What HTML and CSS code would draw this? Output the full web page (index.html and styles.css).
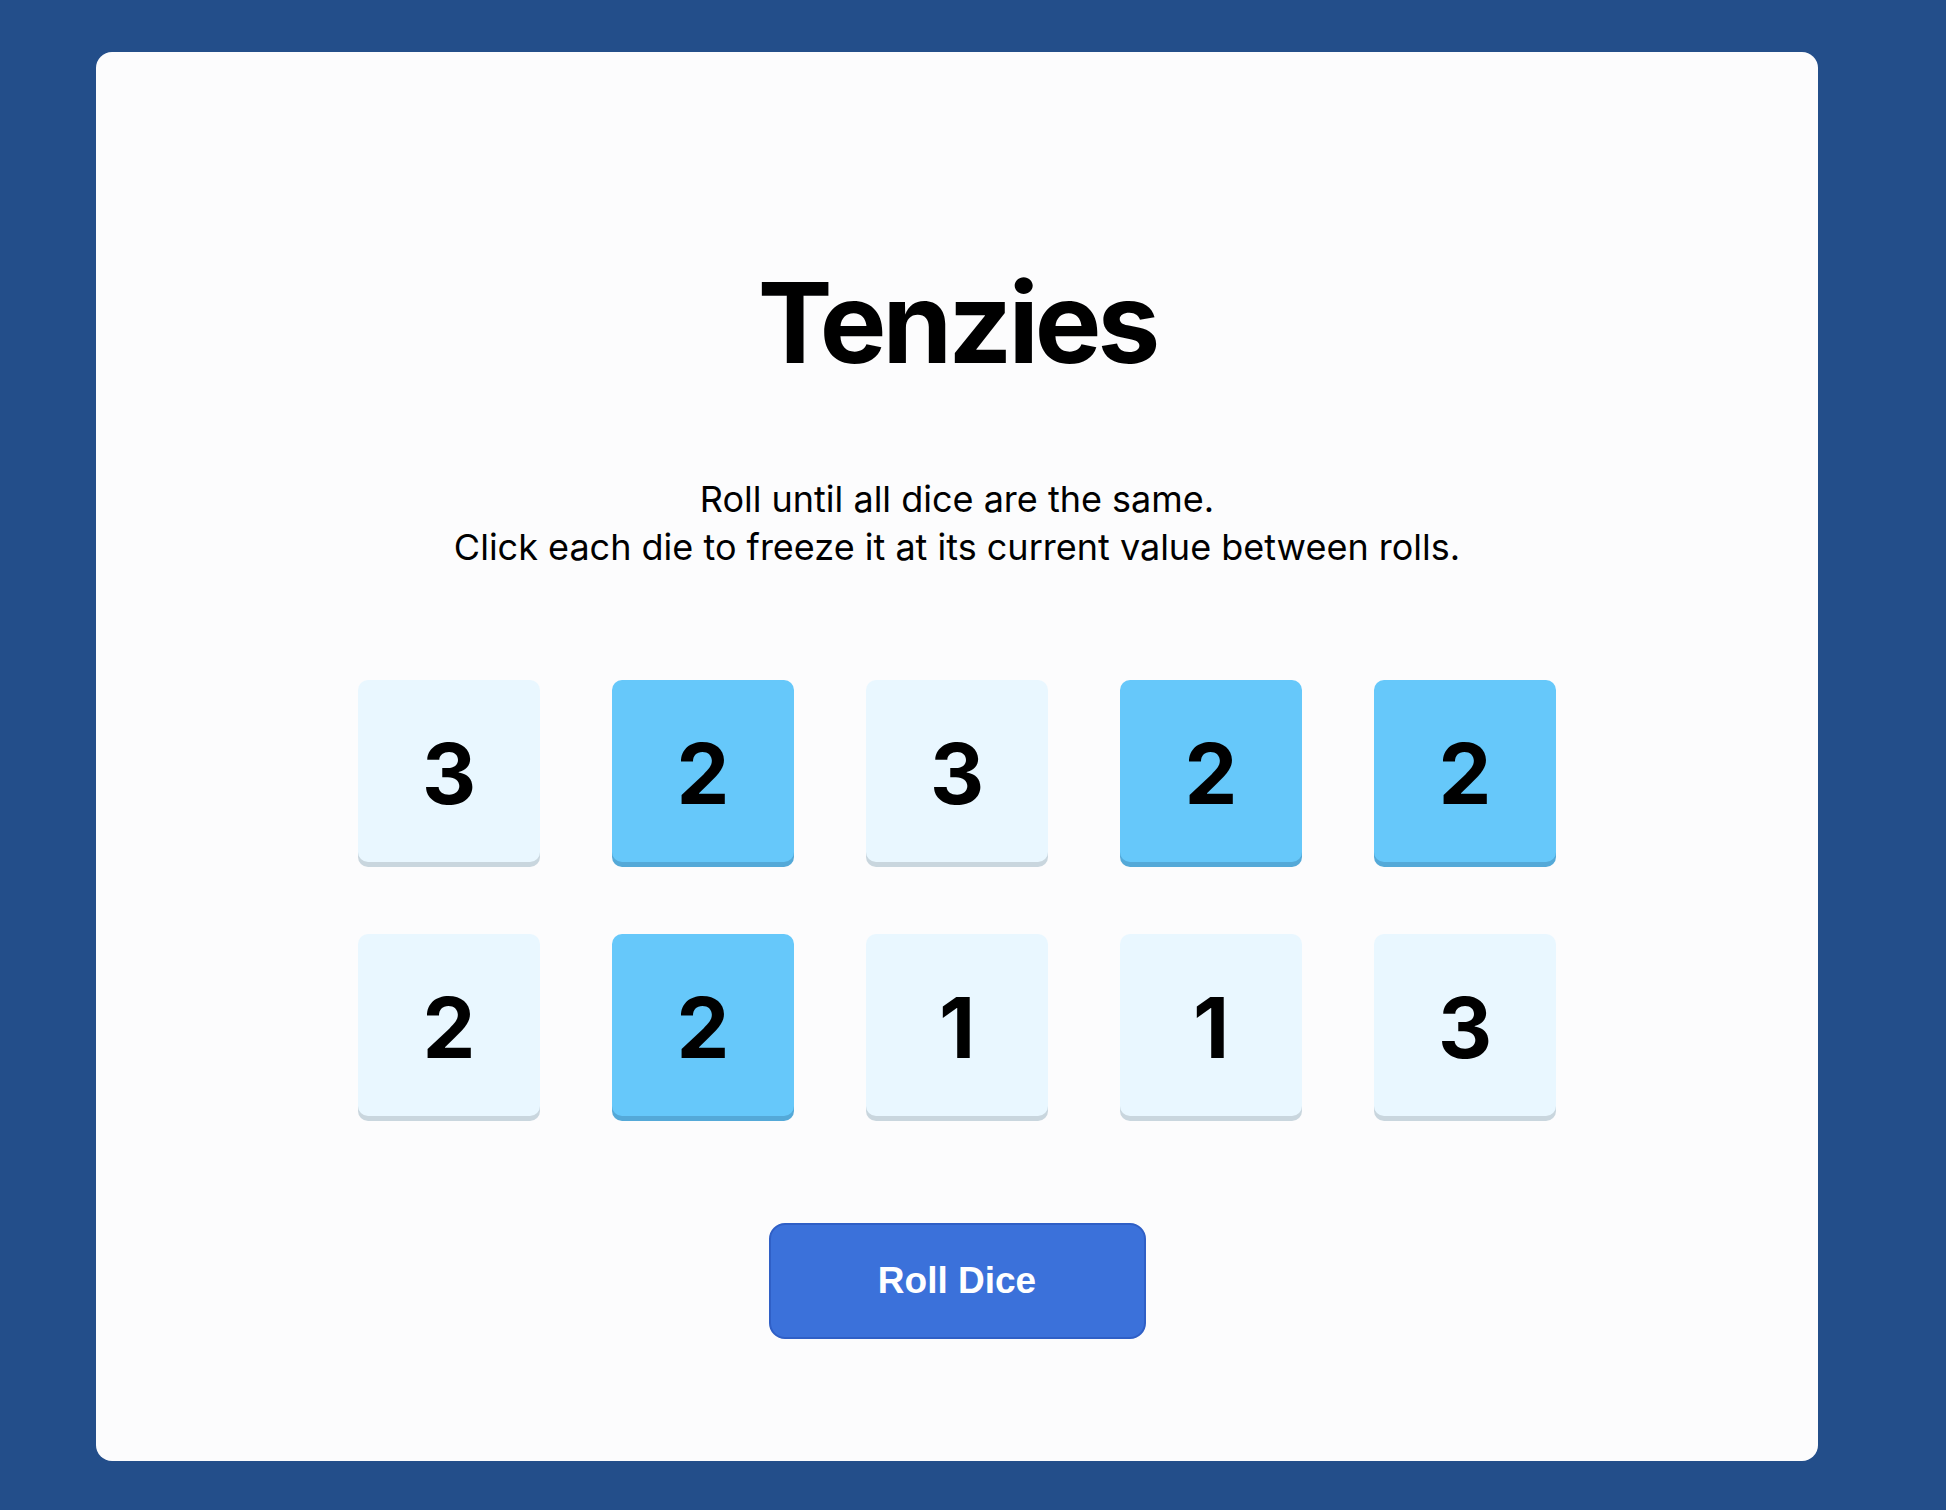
FILE: index.html
```html
<!DOCTYPE html>
<html lang="en">
<head>
<meta charset="utf-8">
<title>Tenzies</title>
<link rel="stylesheet" href="styles.css">
</head>
<body>
<main class="card">
  <h1 class="title">Tenzies</h1>
  <p class="instructions">Roll until all dice are the same.<br>Click each die to freeze it at its current value between rolls.</p>
  <div class="dice">
    <button class="die">3</button>
    <button class="die held">2</button>
    <button class="die">3</button>
    <button class="die held">2</button>
    <button class="die held">2</button>
    <button class="die">2</button>
    <button class="die held">2</button>
    <button class="die">1</button>
    <button class="die">1</button>
    <button class="die">3</button>
  </div>
  <button class="roll">Roll Dice</button>
</main>
</body>
</html>
```
FILE: styles.css
```css
* { box-sizing: border-box; }
html, body { height: 100%; }
body {
  margin: 0;
  background: #234e8a;
  padding: 52px 128px 49px 96px;
  font-family: Inter, "Noto Sans", sans-serif;
}
.card {
  height: 100%;
  background: #fcfcfd;
  border-radius: 16px;
  display: flex;
  flex-direction: column;
  align-items: center;
  padding-top: 214px;
}
.title {
  margin: 0;
  font-size: 112px;
  font-weight: 700;
  line-height: 112px;
  letter-spacing: -4px;
  color: #000;
}
.instructions {
  margin: 97px 0 0;
  font-size: 36px;
  line-height: 48px;
  text-align: center;
  color: #000;
}
.dice {
  margin-top: 109px;
  display: grid;
  grid-template-columns: repeat(5, 182px);
  grid-auto-rows: 182px;
  column-gap: 72px;
  row-gap: 72px;
}
.die {
  border: 0;
  border-radius: 10px;
  background: #e9f7ff;
  box-shadow: 0 5px 0 #c9d6de;
  font-family: Inter, sans-serif;
  font-size: 84px;
  font-weight: 700;
  color: #000;
  padding: 5px 0 0;
}
.die.held {
  background: #66c8fa;
  box-shadow: 0 5px 0 #54a9d8;
}
.roll {
  margin-top: 107px;
  width: 377px;
  height: 116px;
  border: 2px solid #2f5fc6;
  border-radius: 16px;
  background: #3b71da;
  color: #fff;
  font-family: "Liberation Sans", Arial, sans-serif;
  font-size: 37px;
  font-weight: 700;
}
```
